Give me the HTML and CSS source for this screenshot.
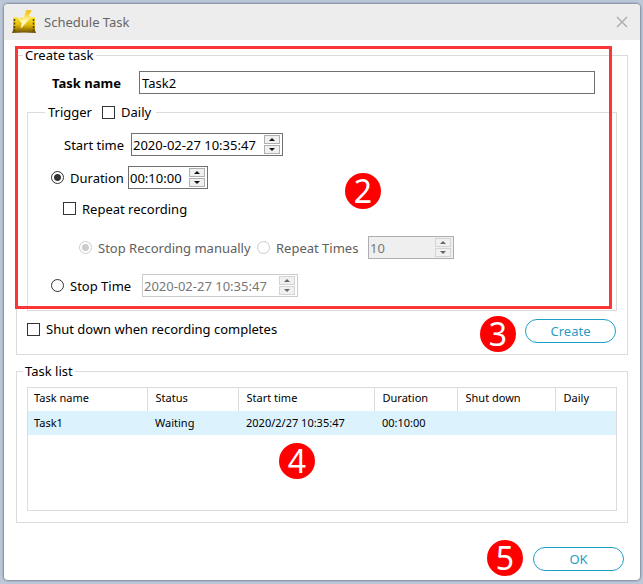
FILE: index.html
```html
<!DOCTYPE html>
<html lang="en">
<head>
<meta charset="utf-8">
<title>Schedule Task</title>
<link rel="stylesheet" href="styles.css">
</head>
<body>
<main class="dialog">
  <header class="titlebar">
    <svg class="logo" viewBox="0 0 24 24" aria-hidden="true">
      <defs>
        <linearGradient id="gold" x1="0" y1="0" x2="0" y2="1">
          <stop offset="0" stop-color="#fbe436"/>
          <stop offset=".5" stop-color="#e3b90c"/>
          <stop offset="1" stop-color="#6a4d00"/>
        </linearGradient>
        <linearGradient id="bolt" x1="0" y1="0" x2="0" y2="1">
          <stop offset="0" stop-color="#eeb800"/>
          <stop offset=".6" stop-color="#fff8a8"/>
          <stop offset="1" stop-color="#fff"/>
        </linearGradient>
      </defs>
      <path fill="url(#gold)" d="M1 7q11 2 22 0v13l1 3q-12-1-24 0l1-3z"/>
      <path fill="none" stroke="#5c4300" stroke-width="1.5" stroke-dasharray="2 1.5" d="M2.500 9v14M21.500 9v14"/>
      <path fill="url(#bolt)" stroke="#fff3b0" stroke-width=".5" d="M14 0h6l-3 6h3L9 18l1-5-4-5 5 2z"/>
    </svg>
    <h1 class="title">Schedule Task</h1>
    <button class="close" type="button" aria-label="Close">
      <svg viewBox="0 0 12 12"><path d="M1 1l10 10M11 1L1 11"/></svg>
    </button>
  </header>

  <form class="content">
    <fieldset class="group create">
      <legend>Create task</legend>
      <div class="name-row">
        <label for="name">Task name</label>
        <input class="field" id="name" type="text" value="Task2">
      </div>

      <fieldset class="group trigger">
        <legend class="trigger-legend">Trigger
          <label class="choice"><input type="checkbox">Daily</label>
        </legend>
        <div class="row start">
          <label for="start">Start time</label>
          <span class="spin wide">
            <input id="start" type="text" value="2020-02-27 10:35:47">
            <span class="steps"><button type="button" aria-label="Later"></button><button type="button" aria-label="Earlier"></button></span>
          </span>
        </div>
        <div class="row duration">
          <label class="choice"><input type="radio" name="end" checked>Duration</label>
          <span class="spin short">
            <input type="text" value="00:10:00" aria-label="Duration">
            <span class="steps"><button type="button" aria-label="Longer"></button><button type="button" aria-label="Shorter"></button></span>
          </span>
        </div>
        <div class="row repeat">
          <label class="choice"><input type="checkbox">Repeat recording</label>
        </div>
        <div class="row mode">
          <label class="choice off"><input type="radio" name="mode" checked disabled>Stop Recording manually</label>
          <label class="choice off"><input type="radio" name="mode" disabled>Repeat Times</label>
          <span class="spin count">
            <input type="text" value="10" aria-label="Repeat times" disabled>
            <span class="steps"><button type="button" aria-label="More" disabled></button><button type="button" aria-label="Fewer" disabled></button></span>
          </span>
        </div>
        <div class="row stop">
          <label class="choice"><input type="radio" name="end">Stop Time</label>
          <span class="spin wide off">
            <input type="text" value="2020-02-27 10:35:47" aria-label="Stop time" disabled>
            <span class="steps"><button type="button" aria-label="Later" disabled></button><button type="button" aria-label="Earlier" disabled></button></span>
          </span>
        </div>
      </fieldset>

      <div class="submit-row">
        <label class="choice"><input type="checkbox">Shut down when recording completes</label>
        <button class="pill" type="button">Create</button>
      </div>
    </fieldset>

    <fieldset class="group list">
      <legend>Task list</legend>
      <div class="table-box">
        <table>
          <colgroup><col class="c-name"><col class="c-status"><col class="c-start"><col class="c-duration"><col class="c-shut"><col></colgroup>
          <thead>
            <tr><th>Task name</th><th>Status</th><th>Start time</th><th>Duration</th><th>Shut down</th><th>Daily</th></tr>
          </thead>
          <tbody>
            <tr><td>Task1</td><td>Waiting</td><td>2020/2/27 10:35:47</td><td>00:10:00</td><td></td><td></td></tr>
          </tbody>
        </table>
      </div>
    </fieldset>

    <div class="footer"><button class="pill" type="button">OK</button></div>
  </form>

  <div class="highlight"></div>
  <span class="badge b2">2</span>
  <span class="badge b3">3</span>
  <span class="badge b4">4</span>
  <span class="badge b5">5</span>
</main>
</body>
</html>
```
FILE: styles.css
```css
* { box-sizing: border-box; }

body {
  margin: 0;
  padding: 4px 3px 4px 4px;
  background: #bcc8d8;
  color: #000;
  font: 13px/18px "Noto Sans", "Open Sans", sans-serif;
}

input, button { font: inherit; color: inherit; margin: 0; }

.dialog {
  position: relative;
  background: #fff;
  border-radius: 4px;
  box-shadow: 0 0 2px 1px #7f899b;
}

.titlebar {
  display: flex;
  align-items: center;
  height: 36px;
  padding: 0 12px 0 8px;
  background: #ededed;
  border-radius: 4px 4px 0 0;
}
.logo { width: 24px; height: 24px; }
.title { margin: 0 auto 0 8px; font-size: 13px; font-weight: 400; color: #666; }
.close { padding: 0; border: 0; background: none; height: 12px; }
.close svg { display: block; width: 12px; height: 12px; fill: none; stroke: #b0b0b0; stroke-width: 1.5; }

.content { padding: 6px 12px 9px; }

.group { min-width: 0; margin: 0; border: 1px solid #dcdcdc; }
legend { height: 18px; padding: 0 2px; }
.create { padding: 7px 10px 11px; }
.create > legend, .list > legend { margin-left: -4px; }

.name-row { display: flex; align-items: center; margin: 0 22px 9px 25px; }
.name-row label { width: 87px; font-weight: 700; }
.field {
  flex: 1;
  min-width: 0;
  height: 23px;
  padding: 0 2px;
  border: 1px solid #707070;
}

.choice { display: inline-flex; align-items: center; gap: 6px; white-space: nowrap; }
input[type="checkbox"], input[type="radio"] {
  flex: none;
  appearance: none;
  width: 13px;
  height: 13px;
  border: 1px solid #333;
  background: #fff;
}
input[type="radio"] { border-radius: 50%; }
input[type="radio"]:checked { background: radial-gradient(circle, #333 0 3px, #fff 4px); }
input[type="radio"]:disabled { border-color: #ccc; }
input[type="radio"]:checked:disabled { background: radial-gradient(circle, #ccc 0 3px, #fff 4px); }
.choice.off { color: #606060; }

.trigger { padding: 12px 14px 13px 23px; }
.trigger-legend { display: flex; gap: 10px; margin-left: -6px; padding: 0 5px 0 3px; }
.row { display: flex; align-items: center; height: 23px; }
.start { padding-left: 13px; }
.start label { width: 67px; }
.duration { margin-top: 10px; }
.duration .choice { width: 77px; }
.repeat { margin-top: 8px; padding-left: 12px; }
.mode { margin-top: 16px; padding-left: 28px; }
.mode .choice:first-child { width: 178px; }
.mode .choice + .choice { width: 111px; }
.stop { margin-top: 15px; }
.stop .choice { width: 91px; }

.spin {
  display: flex;
  height: 23px;
  padding: 1px 2px 1px 1px;
  border: 1px solid #707070;
  background: #fff;
}
.spin > input { flex: 1; min-width: 0; padding: 0; border: 0; background: none; }
.wide { width: 152px; }
.stop .wide { width: 156px; }
.short { width: 80px; }
.count { width: 86px; background: #efefef; border-color: #adadb3; }
.spin.off { border-color: #ccc; }
.spin input:disabled { color: #777; }
.steps { display: grid; grid-template-rows: 9px 9px; gap: 1px; width: 16px; }
.steps button {
  display: grid;
  place-items: center;
  padding: 0;
  border: 1px solid #b0b0b0;
  background: #f0f0f0;
}
.steps button::before {
  content: "";
  border: 3px solid transparent;
  border-top: 0;
  border-bottom: 3px solid #111;
}
.steps button + button::before { border-bottom: 0; border-top: 3px solid #111; }
.steps button:disabled { border-color: #d4d4d4; }
.steps button:disabled::before { border-bottom-color: #666; }
.steps button + button:disabled::before { border-top-color: #666; }

.submit-row { display: flex; align-items: center; justify-content: space-between; margin-top: 8px; padding-right: 1px; }
.submit-row .choice { height: 20px; align-self: flex-start; }
.pill {
  width: 91px;
  height: 24px;
  padding: 0;
  border: 1px solid #1e9fc6;
  border-radius: 12px;
  background: #fff;
  color: #2a9dbf;
}

.list { margin-top: 7px; padding: 7px 10px 11px; }
.table-box { min-height: 124px; border: 1px solid #dcdcdc; }
table { width: 100%; table-layout: fixed; border-collapse: collapse; font-size: 11px; }
th, td { height: 24px; padding: 0 0 0 6px; text-align: left; font-weight: 400; white-space: nowrap; }
th { height: 23px; padding-bottom: 3px; }
th + th { border-left: 1px solid #dcdcdc; }
th + th, td + td { padding-left: 8px; }
tbody tr { background: #dcf2fd; }
.c-name { width: 119px; }
.c-status { width: 91px; }
.c-start { width: 136px; }
.c-duration { width: 83px; }
.c-shut { width: 98px; }

.footer { display: flex; justify-content: flex-end; margin-top: 24px; padding-right: 4px; }

/* Tutorial annotations drawn over the dialog */
.highlight {
  position: absolute;
  inset: 42px 28px 271px 11px;
  border: 3px solid #fc3537;
  pointer-events: none;
}
.badge {
  position: absolute;
  width: 36px;
  height: 36px;
  border-radius: 50%;
  background: #f00;
  color: #fff;
  font-size: 32px;
  line-height: 36px;
  text-align: center;
}
.b2 { left: 341px; top: 169px; }
.b3 { right: 124px; top: 312px; }
.b4 { left: 275px; top: 439px; }
.b5 { right: 117px; bottom: 4px; }
```
